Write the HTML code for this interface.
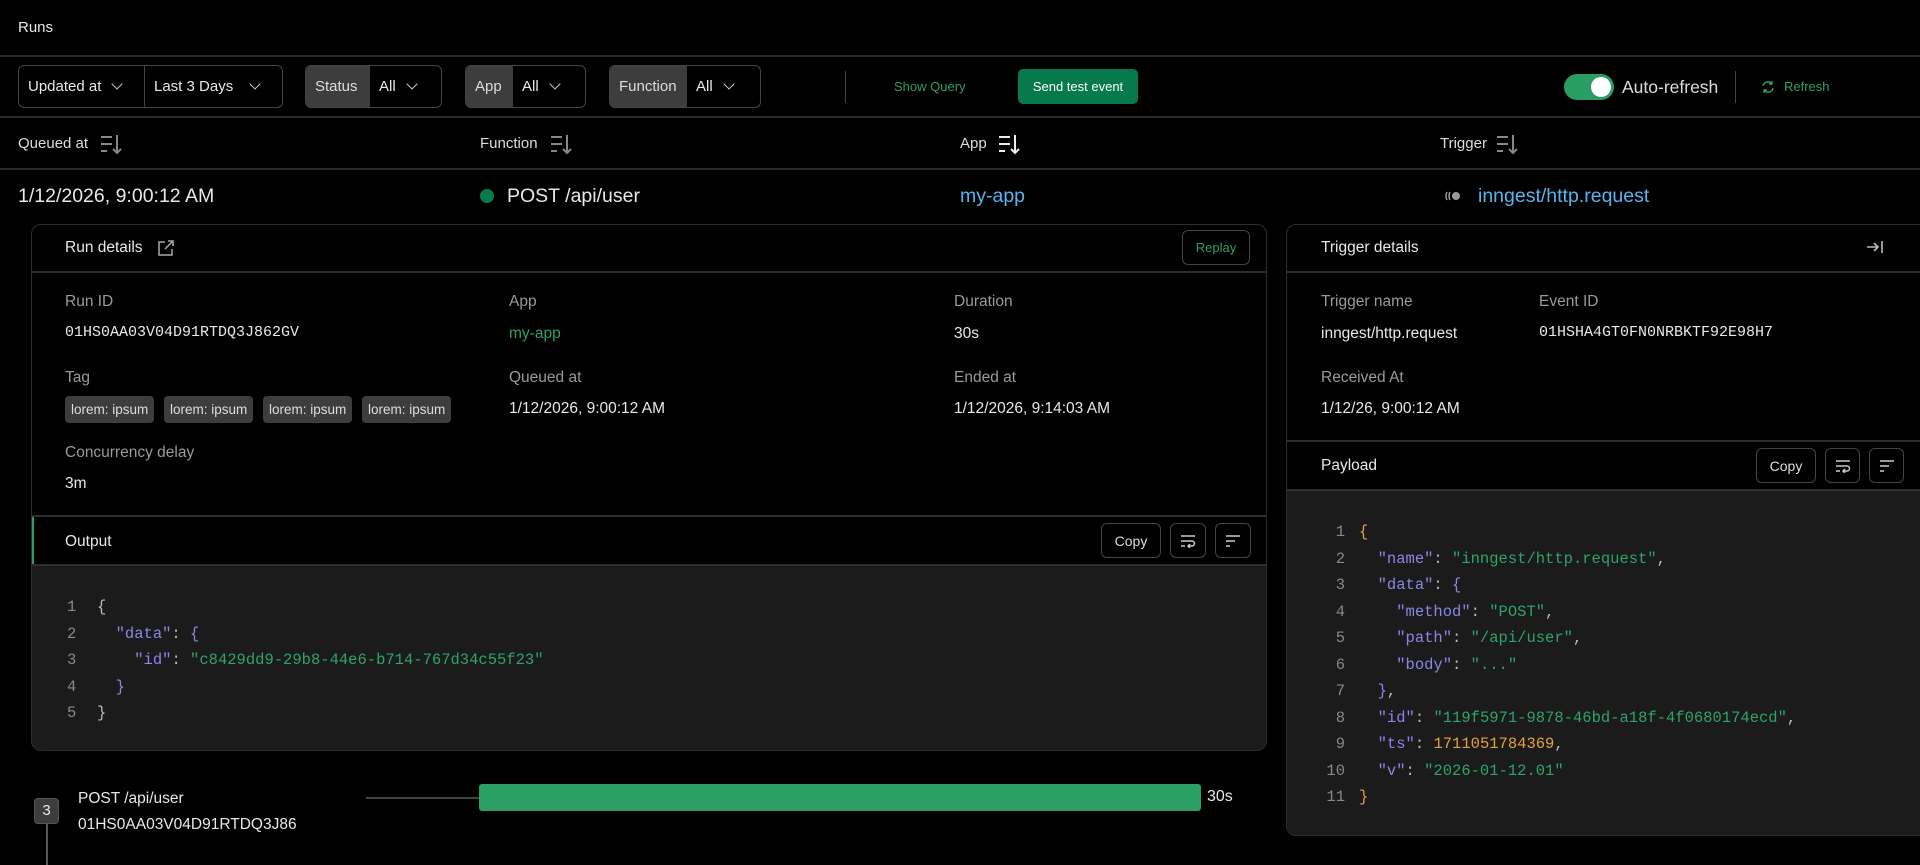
<!DOCTYPE html>
<html><head><meta charset="utf-8"><style>
*{box-sizing:border-box;margin:0;padding:0}
body{width:1920px;height:865px;background:#000;color:#e8e8e8;font-family:"Liberation Sans",sans-serif;position:relative;overflow:hidden}
.a{position:absolute;white-space:nowrap}
.mono{font-family:"Liberation Mono",monospace}
.hl{position:absolute;left:0;right:0;height:2px;background:#2a2a2a}
.box{position:absolute;border:1px solid #444;border-radius:6px;height:43px;top:65px;display:flex;align-items:center;font-size:15px;overflow:hidden}
.box .g{background:#3d3d3d;height:100%;display:flex;align-items:center;padding:0 9px;color:#ddd}
.box .v{display:flex;align-items:center;padding:0 9px;gap:12px}
.chev{width:8px;height:8px;border-right:1.5px solid #ccc;border-bottom:1.5px solid #ccc;transform:rotate(45deg);margin-top:-5px}
.lbl{color:#9a9a9a;font-size:15.5px}
.val{color:#e8e8e8;font-size:15.5px}
.tag{position:absolute;top:396px;height:27px;background:#3d3d3d;border-radius:4px;font-size:13.5px;color:#ddd;padding:0 6px;line-height:27px}
.btn{position:absolute;border:1px solid #444;border-radius:6px;display:flex;align-items:center;justify-content:center;font-size:14px;color:#ddd}
.code{font-family:"Liberation Mono",monospace;font-size:15.5px;position:absolute}
.code div{height:26.5px;white-space:pre}
.ln{color:#888;display:inline-block;width:30px}
.k{color:#8b85ea}.s{color:#2ea36c}.o{color:#e5a03a}.p{color:#bbb}
</style></head><body>
<div class="a" style="left:18px;top:19px;font-size:15px">Runs</div>
<div class="hl" style="top:55px"></div>

<div class="box" style="left:18px;width:265px">
 <div class="v" style="width:126px;border-right:1px solid #444;height:100%">Updated at <span class="chev"></span></div>
 <div class="v">Last 3 Days <span class="chev" style="margin-left:6px"></span></div>
</div>
<div class="box" style="left:305px;width:137px"><div class="g" style="width:64px">Status</div><div class="v">All <span class="chev"></span></div></div>
<div class="box" style="left:465px;width:121px"><div class="g" style="width:47px">App</div><div class="v">All <span class="chev"></span></div></div>
<div class="box" style="left:609px;width:152px"><div class="g" style="width:77px">Function</div><div class="v">All <span class="chev"></span></div></div>
<div class="a" style="left:845px;top:71px;width:1px;height:32px;background:#444"></div>
<div class="a" style="left:894px;top:79px;font-size:13px;color:#2e9e6a">Show Query</div>
<div class="a" style="left:1018px;top:69px;width:120px;height:35px;background:#067a4c;border-radius:5px;font-size:13px;color:#fff;text-align:center;line-height:35px">Send test event</div>
<div class="a" style="left:1564px;top:74px;width:50px;height:26px;background:#2a9d65;border-radius:13px"><div style="position:absolute;right:3px;top:3px;width:20px;height:20px;background:#fff;border-radius:50%"></div></div>
<div class="a" style="left:1622px;top:77px;font-size:17.5px;color:#ddd">Auto-refresh</div>
<div class="a" style="left:1735px;top:71px;width:1px;height:32px;background:#444"></div>
<svg class="a" style="left:1761px;top:80px" width="14" height="14" viewBox="0 0 14 14" fill="none" stroke="#2e9e6a" stroke-width="1.4"><path d="M2 6a5 5 0 0 1 9-2M12 8a5 5 0 0 1-9 2M11 1v3h-3M3 13v-3h3"/></svg>
<div class="a" style="left:1784px;top:79px;font-size:13px;color:#2e9e6a">Refresh</div>
<div class="hl" style="top:116px"></div>

<div class="a" style="left:18px;top:135px;font-size:15px;color:#ddd">Queued at</div>
<div class="a" style="left:480px;top:135px;font-size:15px;color:#ddd">Function</div>
<div class="a" style="left:960px;top:135px;font-size:15px;color:#ddd">App</div>
<div class="a" style="left:1440px;top:135px;font-size:15px;color:#ddd">Trigger</div>
<svg class="a" style="left:100px;top:134px" width="24" height="22" fill="none" stroke="#888" stroke-width="2"><path d="M1 3h11M1 10h11M1 17h6M17 1v18M13 15l4 4 4-4"/></svg>
<svg class="a" style="left:550px;top:134px" width="24" height="22" fill="none" stroke="#888" stroke-width="2"><path d="M1 3h11M1 10h11M1 17h6M17 1v18M13 15l4 4 4-4"/></svg>
<svg class="a" style="left:998px;top:134px" width="24" height="22" fill="none" stroke="#eee" stroke-width="2"><path d="M1 3h11M1 10h11M1 17h6M17 1v18M13 15l4 4 4-4"/></svg>
<svg class="a" style="left:1496px;top:134px" width="24" height="22" fill="none" stroke="#888" stroke-width="2"><path d="M1 3h11M1 10h11M1 17h6M17 1v18M13 15l4 4 4-4"/></svg>
<div class="hl" style="top:168px"></div>

<div class="a" style="left:18px;top:185px;font-size:19.5px">1/12/2026, 9:00:12 AM</div>
<div class="a" style="left:480px;top:189px;width:14px;height:14px;border-radius:50%;background:#067a4c"></div>
<div class="a" style="left:507px;top:185px;font-size:19.5px">POST /api/user</div>
<div class="a" style="left:960px;top:185px;font-size:19.5px;color:#56b4f0">my-app</div>
<svg class="a" style="left:1444px;top:190px" width="18" height="12"><path d="M3 2q-2 4 0 8M6 2q-2 4 0 8" stroke="#999" stroke-width="1.5" fill="none"/><circle cx="12" cy="6" r="4" fill="#999"/></svg>
<div class="a" style="left:1478px;top:185px;font-size:19.5px;color:#56b4f0">inngest/http.request</div>

<!-- Run details panel -->
<div class="a" style="left:31px;top:224px;width:1236px;height:527px;border:1.5px solid #2e2e2e;border-radius:10px;overflow:hidden">
 <div class="a" style="left:0;right:0;top:46px;height:2px;background:#2e2e2e"></div>
 <div class="a" style="left:0;right:0;top:290px;height:2px;background:#2e2e2e"></div>
 <div class="a" style="left:0;top:292px;width:2px;height:48px;background:#2a9d65"></div>
 <div class="a" style="left:0;right:0;top:339px;bottom:0;background:#1b1b1b;border-top:2px solid #2e2e2e"></div>
</div>
<div class="a" style="left:65px;top:239px;font-size:15.5px">Run details</div>
<svg class="a" style="left:157px;top:239px" width="18" height="18" fill="none" stroke="#aaa" stroke-width="1.5"><path d="M8 3H2v13h13v-6M11 2h5v5M16 2l-8 8"/></svg>
<div class="btn" style="left:1182px;top:230px;width:68px;height:35px;color:#2e9e6a;font-size:13px">Replay</div>

<div class="a lbl" style="left:65px;top:293px">Run ID</div>
<div class="a mono" style="left:65px;top:324px;font-size:15px">01HS0AA03V04D91RTDQ3J862GV</div>
<div class="a lbl" style="left:509px;top:293px">App</div>
<div class="a" style="left:509px;top:325px;font-size:15.5px;color:#2e9e6a">my-app</div>
<div class="a lbl" style="left:954px;top:293px">Duration</div>
<div class="a val" style="left:954px;top:325px">30s</div>

<div class="a lbl" style="left:65px;top:369px">Tag</div>
<div class="tag" style="left:65px">lorem: ipsum</div>
<div class="tag" style="left:164px">lorem: ipsum</div>
<div class="tag" style="left:263px">lorem: ipsum</div>
<div class="tag" style="left:362px">lorem: ipsum</div>
<div class="a lbl" style="left:509px;top:369px">Queued at</div>
<div class="a val" style="left:509px;top:400px">1/12/2026, 9:00:12 AM</div>
<div class="a lbl" style="left:954px;top:369px">Ended at</div>
<div class="a val" style="left:954px;top:400px">1/12/2026, 9:14:03 AM</div>
<div class="a lbl" style="left:65px;top:444px">Concurrency delay</div>
<div class="a val" style="left:65px;top:475px">3m</div>

<div class="a" style="left:65px;top:533px;font-size:15.5px">Output</div>
<div class="btn" style="left:1101px;top:523px;width:60px;height:35px">Copy</div>
<div class="btn" style="left:1170px;top:523px;width:36px;height:35px"><svg width="16" height="14" fill="none" stroke="#ccc" stroke-width="1.5"><path d="M1 2h14M1 7h11a2.5 2.5 0 0 1 0 5H8M10 10l-2 2 2 2M1 12h4"/></svg></div>
<div class="btn" style="left:1215px;top:523px;width:36px;height:35px"><svg width="16" height="14" fill="none" stroke="#ccc" stroke-width="1.5"><path d="M1 2h14M1 7h9M1 12h4"/></svg></div>

<div class="code" style="left:67px;top:598px">
<div><span class="ln">1</span><span class="p">{</span></div>
<div><span class="ln">2</span>  <span class="k">"data"</span><span class="p">: </span><span class="k">{</span></div>
<div><span class="ln">3</span>    <span class="k">"id"</span><span class="p">: </span><span class="s">"c8429dd9-29b8-44e6-b714-767d34c55f23"</span></div>
<div><span class="ln">4</span>  <span class="k">}</span></div>
<div><span class="ln">5</span><span class="p">}</span></div>
</div>

<!-- timeline -->
<div class="a" style="left:34px;top:798px;width:25px;height:26px;background:#3d3d3d;border-radius:4px;border:1px solid #555;font-size:15px;text-align:center;line-height:24px">3</div>
<div class="a" style="left:46px;top:824px;width:1.5px;height:41px;background:#555"></div>
<div class="a" style="left:78px;top:790px;font-size:15.5px">POST /api/user</div>
<div class="a" style="left:78px;top:816px;font-size:15.5px">01HS0AA03V04D91RTDQ3J86</div>
<div class="a" style="left:366px;top:797px;width:113px;height:1.5px;background:#444"></div>
<div class="a" style="left:479px;top:784px;width:722px;height:27px;background:#2c9f66;border-radius:3px"></div>
<div class="a" style="left:1207px;top:788px;font-size:16px">30s</div>

<!-- Trigger panel -->
<div class="a" style="left:1286px;top:224px;width:660px;height:612px;border:1.5px solid #2e2e2e;border-radius:10px;overflow:hidden">
 <div class="a" style="left:0;right:0;top:46px;height:2px;background:#2e2e2e"></div>
 <div class="a" style="left:0;right:0;top:215px;height:2px;background:#2e2e2e"></div>
 <div class="a" style="left:0;right:0;top:264px;bottom:0;background:#1b1b1b;border-top:2px solid #2e2e2e"></div>
</div>
<div class="a" style="left:1321px;top:239px;font-size:15.5px">Trigger details</div>
<svg class="a" style="left:1866px;top:239px" width="18" height="16" fill="none" stroke="#bbb" stroke-width="1.6"><path d="M1 8h11M8 4l4 4-4 4M16 2v12"/></svg>
<div class="a lbl" style="left:1321px;top:293px">Trigger name</div>
<div class="a val" style="left:1321px;top:325px">inngest/http.request</div>
<div class="a lbl" style="left:1539px;top:293px">Event ID</div>
<div class="a mono" style="left:1539px;top:324px;font-size:15px">01HSHA4GT0FN0NRBKTF92E98H7</div>
<div class="a lbl" style="left:1321px;top:369px">Received At</div>
<div class="a val" style="left:1321px;top:400px">1/12/26, 9:00:12 AM</div>
<div class="a" style="left:1321px;top:457px;font-size:15.5px">Payload</div>
<div class="btn" style="left:1756px;top:448px;width:60px;height:35px">Copy</div>
<div class="btn" style="left:1825px;top:448px;width:35px;height:35px"><svg width="16" height="14" fill="none" stroke="#ccc" stroke-width="1.5"><path d="M1 2h14M1 7h11a2.5 2.5 0 0 1 0 5H8M10 10l-2 2 2 2M1 12h4"/></svg></div>
<div class="btn" style="left:1869px;top:448px;width:35px;height:35px"><svg width="16" height="14" fill="none" stroke="#ccc" stroke-width="1.5"><path d="M1 2h14M1 7h9M1 12h4"/></svg></div>

<div class="code" style="left:1321px;top:523px">
<div><span class="ln" style="text-align:right;width:24px;margin-right:14px">1</span><span class="o">{</span></div>
<div><span class="ln" style="text-align:right;width:24px;margin-right:14px">2</span>  <span class="k">"name"</span><span class="p">: </span><span class="s">"inngest/http.request"</span><span class="p">,</span></div>
<div><span class="ln" style="text-align:right;width:24px;margin-right:14px">3</span>  <span class="k">"data"</span><span class="p">: </span><span class="k">{</span></div>
<div><span class="ln" style="text-align:right;width:24px;margin-right:14px">4</span>    <span class="k">"method"</span><span class="p">: </span><span class="s">"POST"</span><span class="p">,</span></div>
<div><span class="ln" style="text-align:right;width:24px;margin-right:14px">5</span>    <span class="k">"path"</span><span class="p">: </span><span class="s">"/api/user"</span><span class="p">,</span></div>
<div><span class="ln" style="text-align:right;width:24px;margin-right:14px">6</span>    <span class="k">"body"</span><span class="p">: </span><span class="s">"..."</span></div>
<div><span class="ln" style="text-align:right;width:24px;margin-right:14px">7</span>  <span class="k">}</span><span class="p">,</span></div>
<div><span class="ln" style="text-align:right;width:24px;margin-right:14px">8</span>  <span class="k">"id"</span><span class="p">: </span><span class="s">"119f5971-9878-46bd-a18f-4f0680174ecd"</span><span class="p">,</span></div>
<div><span class="ln" style="text-align:right;width:24px;margin-right:14px">9</span>  <span class="k">"ts"</span><span class="p">: </span><span class="o">1711051784369</span><span class="p">,</span></div>
<div><span class="ln" style="text-align:right;width:24px;margin-right:14px">10</span>  <span class="k">"v"</span><span class="p">: </span><span class="s">"2026-01-12.01"</span></div>
<div><span class="ln" style="text-align:right;width:24px;margin-right:14px">11</span><span class="o">}</span></div>
</div>
</body></html>
